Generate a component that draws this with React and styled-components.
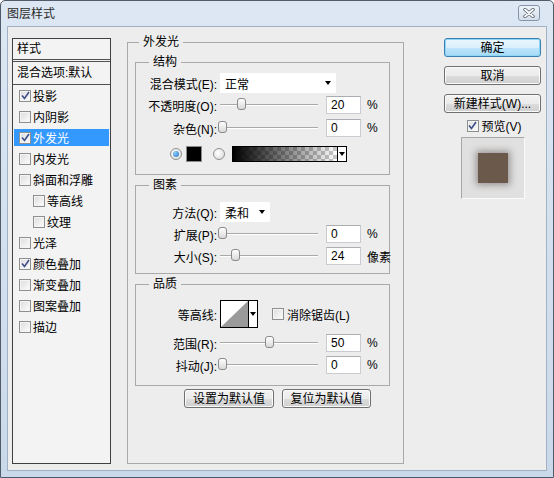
import React from "react";
import styled, { createGlobalStyle } from "styled-components";

const GlobalStyle = createGlobalStyle`
  html, body {
    margin: 0;
    padding: 0;
    background: #ffffff;
  }
  body {
    font-family: "Liberation Sans", "Noto Sans CJK SC", sans-serif;
    font-size: 12px;
    color: #000;
  }
  * {
    box-sizing: border-box;
  }
`;

const Window = styled.div`
  width: 554px;
  height: 478px;
  border: 1px solid #4f5b68;
  border-radius: 5px 5px 0 0;
  background: linear-gradient(#dce7f3, #cad9ea);
  display: flex;
  flex-direction: column;
  padding: 0 6px 6px;
`;

const TitleBar = styled.div`
  height: 25px;
  display: flex;
  align-items: center;
  justify-content: space-between;
  color: #2b2b2b;
  line-height: 14px;
`;

const CloseButton = styled.div`
  width: 22px;
  height: 16px;
  margin-right: 7px;
  margin-top: -2px;
  border: 1px solid #8594a8;
  border-radius: 3px;
  background: linear-gradient(#eef3f9, #d3dfec);
  display: flex;
  align-items: center;
  justify-content: center;
`;

const Body = styled.div`
  flex: 1;
  display: flex;
  background: #ededed;
  border: 1px solid #a2b2c5;
  padding: 11px 0 6px 4px;
`;

/* left style list */
const StylePanel = styled.div`
  width: 99px;
  border: 1px solid #404040;
  background: #f3f3f3;
  display: flex;
  flex-direction: column;
`;

const PanelHead = styled.div`
  height: 23px;
  padding-left: 4px;
  line-height: 20px;
  border-bottom: 3px double #505050;
`;

const PanelBlend = styled.div`
  height: 23px;
  padding-left: 4px;
  line-height: 22px;
  border-bottom: 1px solid #505050;
  white-space: nowrap;
`;

const StyleItem = styled.div`
  height: 17px;
  margin: 2px 1px;
  padding-left: ${(p) => (p.$indent ? 19 : 5)}px;
  display: flex;
  align-items: center;
  gap: 2px;
  background: ${(p) => (p.$active ? "#3399ff" : "transparent")};
  color: ${(p) => (p.$active ? "#fff" : "#000")};
  white-space: nowrap;
`;

const CheckBox = styled.span`
  width: 12px;
  height: 12px;
  flex: none;
  border: 1px solid #8e8f8f;
  background: linear-gradient(135deg, #dcdcdc, #fdfdfd);
  box-shadow: inset 0 0 0 1px #f4f4f4;
  display: inline-flex;
  align-items: center;
  justify-content: center;
`;

/* middle groups */
const Group = styled.fieldset`
  margin: 0;
  min-width: 0;
  border: 1px solid #a9a9a9;
  padding: ${(p) => p.$pad};
  display: flex;
  flex-direction: column;
  gap: ${(p) => p.$gap || 0}px;
`;

const OuterGroup = styled(Group)`
  width: 277px;
  margin-left: 16px;
  margin-top: -3px;
`;

const Legend = styled.legend`
  font-size: 12px;
  line-height: 14px;
  padding: 0 4px;
  margin-left: ${(p) => p.$offset}px;
`;

const Row = styled.div`
  display: grid;
  grid-template-columns: 84px 106px 40px auto;
  align-items: center;
  height: ${(p) => p.$h || 22}px;
  margin-top: ${(p) => p.$mt || 0}px;
`;

const Label = styled.span`
  text-align: right;
  padding-right: 3px;
  white-space: nowrap;
`;

const Track = styled.div`
  position: relative;
  width: 98px;
  height: 2px;
  border-top: 1px solid #a9a9a9;
  border-bottom: 1px solid #ffffff;
`;

const Thumb = styled.div`
  position: absolute;
  top: -7px;
  width: 9px;
  height: 12px;
  border: 1px solid #8a8a8a;
  border-radius: 3px;
  background: linear-gradient(#ffffff, #d9d9d9);
`;

const NumBox = styled.div`
  width: 35px;
  height: 18px;
  background: #fff;
  border: 1px solid #c9cbd0;
  border-top-color: #abadb3;
  padding-left: 4px;
  line-height: 16px;
`;

const Unit = styled.span`
  padding-left: 1px;
  white-space: nowrap;
`;

const Select = styled.div`
  grid-column: span 3;
  width: ${(p) => p.$w}px;
  height: 20px;
  background: #fff;
  display: flex;
  align-items: center;
  justify-content: space-between;
  padding: 0 5px 0 5px;
`;

const Caret = styled.span`
  width: 0;
  height: 0;
  border-left: 3.5px solid transparent;
  border-right: 3.5px solid transparent;
  border-top: 4px solid #000;
`;

const ColorRow = styled.div`
  height: 22px;
  margin-top: 3px;
  padding-left: 34px;
  display: flex;
  align-items: center;
`;

const Radio = styled.span`
  width: 12px;
  height: 12px;
  border-radius: 50%;
  border: 1px solid #8e8f8f;
  background: radial-gradient(circle at 40% 40%, #ffffff, #d8d8d8);
  display: inline-flex;
  align-items: center;
  justify-content: center;
  margin-right: ${(p) => p.$mr}px;

  &::after {
    content: "";
    display: ${(p) => (p.$on ? "block" : "none")};
    width: 6px;
    height: 6px;
    border-radius: 50%;
    background: radial-gradient(circle at 35% 35%, #8fd0ff, #1d6fc0);
  }
`;

const Swatch = styled.span`
  width: 16px;
  height: 16px;
  background: #000;
  border: 1px solid #8a8a8a;
  margin-right: 11px;
`;

const GradientPicker = styled.div`
  width: 115px;
  height: 16px;
  border: 1px solid #000;
  display: flex;
`;

const GradientFill = styled.div`
  flex: 1;
  background:
    linear-gradient(to right, #000, rgba(0, 0, 0, 0)),
    conic-gradient(#c8c8c8 25%, #fff 0 50%, #c8c8c8 0 75%, #fff 0) 0 0 / 8px 8px;
`;

const DropPart = styled.div`
  width: 9px;
  border-left: 1px solid #000;
  background: #fff;
  display: flex;
  align-items: center;
  justify-content: center;
`;

const ContourCell = styled.div`
  grid-column: span 3;
  display: flex;
  align-items: center;
`;

const ContourBox = styled.div`
  width: 38px;
  height: 28px;
  border: 1px solid #000;
  display: flex;
  background: #fff;
`;

const ContourArt = styled.svg`
  flex: 1;
  height: 100%;
  display: block;
`;

const InlineCheck = styled.label`
  display: flex;
  align-items: center;
  gap: 3px;
  margin-left: 14px;
  white-space: nowrap;
`;

const ButtonRow = styled.div`
  display: flex;
  gap: 8px;
  padding-left: 49px;
`;

const Button = styled.div`
  width: ${(p) => p.$w || 97}px;
  height: 19px;
  border: 1px solid ${(p) => (p.$primary ? "#3c7fb1" : "#707070")};
  border-radius: 3px;
  background: ${(p) =>
    p.$primary
      ? "linear-gradient(#eaf6fd 0%, #d9f0fc 50%, #bee6fd 51%, #a7d9f5 100%)"
      : "linear-gradient(#f2f2f2 0%, #ebebeb 50%, #dddddd 51%, #cfcfcf 100%)"};
  box-shadow: inset 0 0 0 1px ${(p) => (p.$primary ? "#8ed6f8" : "#fbfbfb")};
  display: flex;
  align-items: center;
  justify-content: center;
  line-height: 14px;
  white-space: nowrap;
`;

/* right column */
const SideColumn = styled.div`
  width: 97px;
  margin-left: 40px;
  display: flex;
  flex-direction: column;
  gap: 9px;
`;

const PreviewToggle = styled.label`
  display: flex;
  align-items: center;
  justify-content: center;
  gap: 3px;
  height: 13px;
  margin-top: -3px;
  padding-left: 3px;
`;

const PreviewBox = styled.div`
  width: 64px;
  height: 62px;
  align-self: center;
  margin-top: -4px;
  background: #e0e0e0;
  border-top: 1px solid #a8a8a8;
  border-left: 1px solid #a8a8a8;
  border-right: 1px solid #fafafa;
  border-bottom: 1px solid #fafafa;
  display: flex;
  align-items: center;
  justify-content: center;
`;

const PreviewChip = styled.div`
  width: 30px;
  height: 30px;
  background: #6b594c;
  box-shadow: 0 0 7px 2px rgba(40, 30, 25, 0.4);
`;

const Tick = () => (
  <svg width="9" height="9" viewBox="0 0 9 9">
    <path d="M1 4.5 L3.5 7.5 L8 1" fill="none" stroke="#3d4f8a" strokeWidth="1.6" />
  </svg>
);

const Check = ({ on }) => <CheckBox>{on && <Tick />}</CheckBox>;

const Slider = ({ pos }) => (
  <Track>
    <Thumb style={{ left: `${-2 + pos * 0.93}px` }} />
  </Track>
);

const SliderRow = ({ label, pos, value, unit = "%", mt }) => (
  <Row $mt={mt}>
    <Label>{label}</Label>
    <Slider pos={pos} />
    <NumBox>{value}</NumBox>
    <Unit>{unit}</Unit>
  </Row>
);

const styleItems = [
  { name: "投影", on: true },
  { name: "内阴影" },
  { name: "外发光", on: true, active: true },
  { name: "内发光" },
  { name: "斜面和浮雕" },
  { name: "等高线", indent: true },
  { name: "纹理", indent: true },
  { name: "光泽" },
  { name: "颜色叠加", on: true },
  { name: "渐变叠加" },
  { name: "图案叠加" },
  { name: "描边" },
];

export default function App() {
  return (
    <>
      <GlobalStyle />
      <Window>
        <TitleBar>
          <span>图层样式</span>
          <CloseButton>
            <svg width="12" height="10" viewBox="0 0 12 10">
              <path d="M2 1.5 L10 8.5 M10 1.5 L2 8.5" stroke="#56606c" strokeWidth="3.4" strokeLinecap="round" />
              <path d="M2 1.5 L10 8.5 M10 1.5 L2 8.5" stroke="#ffffff" strokeWidth="1.8" strokeLinecap="round" />
            </svg>
          </CloseButton>
        </TitleBar>
        <Body>
          <StylePanel>
            <PanelHead>样式</PanelHead>
            <PanelBlend>混合选项:默认</PanelBlend>
            {styleItems.map((item) => (
              <StyleItem key={item.name} $indent={item.indent} $active={item.active}>
                <Check on={item.on} />
                <span>{item.name}</span>
              </StyleItem>
            ))}
          </StylePanel>

          <OuterGroup $pad="6px 13px 0 7px" $gap={3}>
            <Legend $offset={4}>外发光</Legend>

            <Group $pad="4px 0 9px 0" $gap={1}>
              <Legend $offset={13}>结构</Legend>
              <Row $h={20}>
                <Label>混合模式(E):</Label>
                <Select $w={116}>
                  <span>正常</span>
                  <Caret />
                </Select>
              </Row>
              <SliderRow label="不透明度(O):" pos={20} value="20" />
              <SliderRow label="杂色(N):" pos={0} value="0" />
              <ColorRow>
                <Radio $on $mr={4} />
                <Swatch />
                <Radio $mr={7} />
                <GradientPicker>
                  <GradientFill />
                  <DropPart>
                    <Caret />
                  </DropPart>
                </GradientPicker>
              </ColorRow>
            </Group>

            <Group $pad="9px 0 6px 0">
              <Legend $offset={13}>图素</Legend>
              <Row>
                <Label>方法(Q):</Label>
                <Select $w={50}>
                  <span>柔和</span>
                  <Caret />
                </Select>
              </Row>
              <SliderRow label="扩展(P):" pos={0} value="0" />
              <SliderRow label="大小(S):" pos={14} value="24" unit="像素" />
            </Group>

            <Group $pad="8px 0 9px 0">
              <Legend $offset={13}>品质</Legend>
              <Row $h={30}>
                <Label>等高线:</Label>
                <ContourCell>
                  <ContourBox>
                    <ContourArt viewBox="0 0 28 26" preserveAspectRatio="none">
                      <polygon points="0,26 28,0 28,26" fill="#9a9a9a" />
                    </ContourArt>
                    <DropPart>
                      <Caret />
                    </DropPart>
                  </ContourBox>
                  <InlineCheck>
                    <Check />
                    <span>消除锯齿(L)</span>
                  </InlineCheck>
                </ContourCell>
              </Row>
              <SliderRow label="范围(R):" pos={50} value="50" mt={3} />
              <SliderRow label="抖动(J):" pos={0} value="0" />
            </Group>

            <ButtonRow>
              <Button $w={90}>设置为默认值</Button>
              <Button $w={89}>复位为默认值</Button>
            </ButtonRow>
          </OuterGroup>

          <SideColumn>
            <Button $primary>确定</Button>
            <Button>取消</Button>
            <Button>新建样式(W)...</Button>
            <PreviewToggle>
              <Check on />
              <span>预览(V)</span>
            </PreviewToggle>
            <PreviewBox>
              <PreviewChip />
            </PreviewBox>
          </SideColumn>
        </Body>
      </Window>
    </>
  );
}
